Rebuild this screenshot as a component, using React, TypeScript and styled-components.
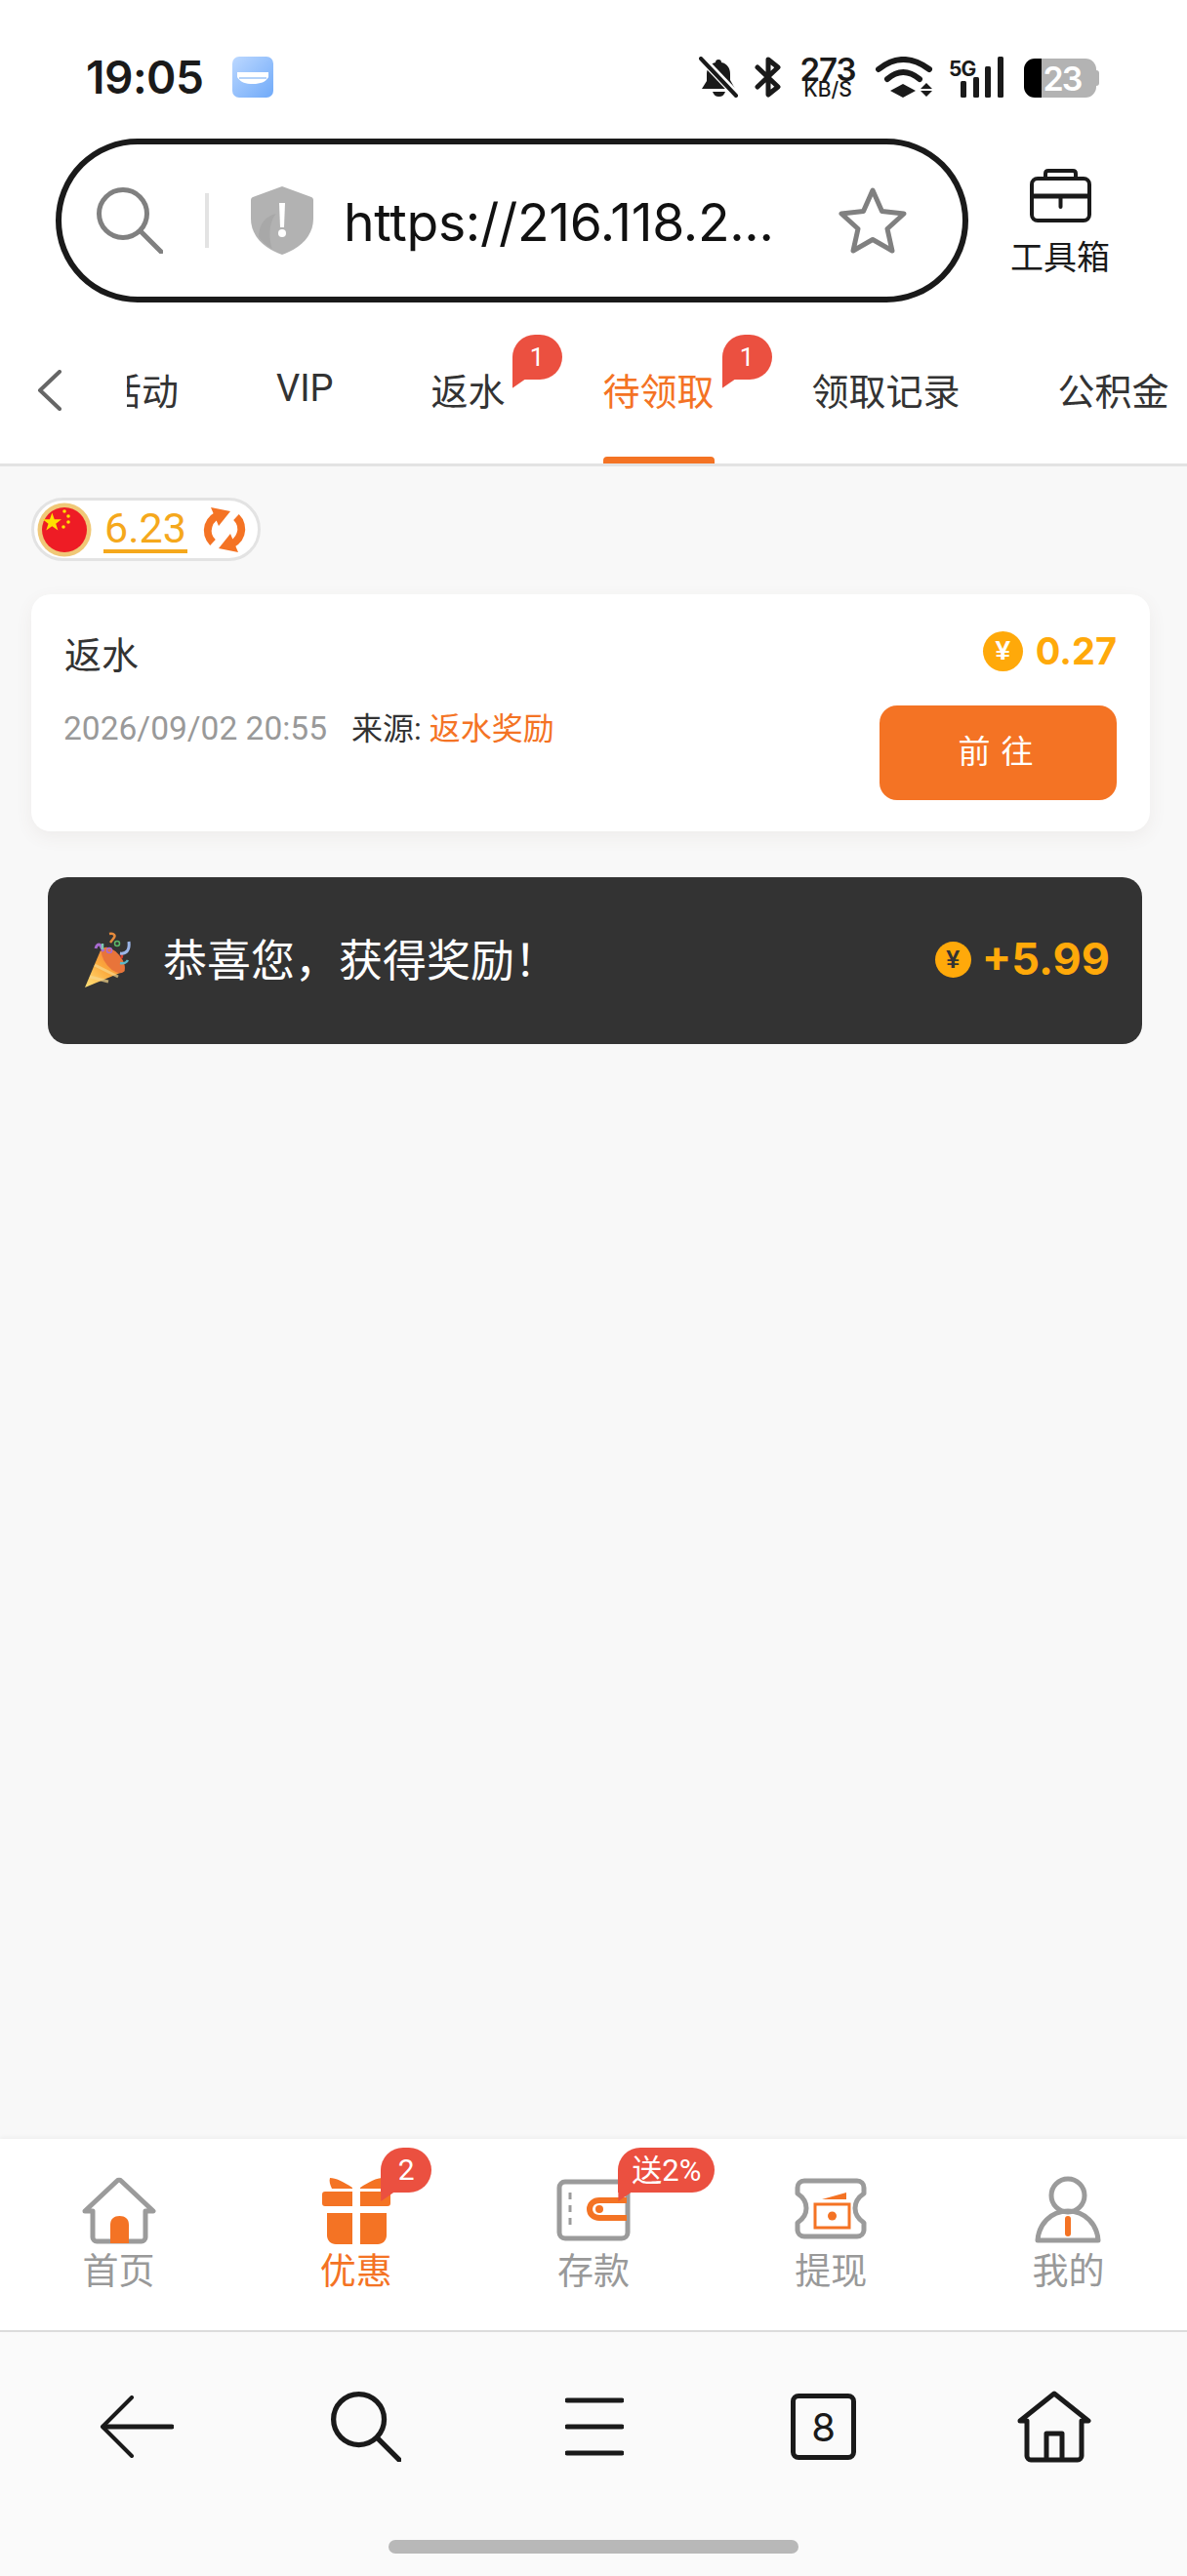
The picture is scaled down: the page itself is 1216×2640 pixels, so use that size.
import React from 'react';
import styled, { createGlobalStyle } from 'styled-components';

const ORANGE = '#f47324';
const GOLD = '#ffa90a';
const RED = '#eb5040';
const CJK = '"Noto Sans CJK SC", sans-serif';

const GlobalStyle = createGlobalStyle`
  html, body {
    margin: 0;
    padding: 0;
    background: #fff;
  }
  * {
    box-sizing: border-box;
  }
  body {
    font-family: Roboto, ${CJK};
  }
`;

const Page = styled.div`
  width: 1216px;
  height: 2640px;
  display: flex;
  flex-direction: column;
  overflow: hidden;
  background: #fff;
`;

/* status bar */
const StatusBar = styled.div`
  height: 142px;
  flex: none;
  display: flex;
  justify-content: space-between;
  align-items: flex-start;
  padding: 58px 90px 0 88px;
`;

const StatusLeft = styled.div`
  display: flex;
  align-items: center;
  gap: 30px;
`;

const Clock = styled.span`
  font-family: Inter, sans-serif;
  font-size: 46px;
  font-weight: 600;
  line-height: 42px;
  letter-spacing: -0.5px;
  color: #1a1a1a;
`;

const StatusRight = styled.div`
  display: flex;
  align-items: flex-start;
  gap: 0;
  height: 42px;
`;

const StatusGap = styled.span`
  width: 16px;
`;

const Speed = styled.div`
  width: 56px;
  margin: 0 21px 0 20px;
  display: flex;
  flex-direction: column;
  align-items: center;
  font-family: Inter, sans-serif;
  font-weight: 600;
  color: #1a1a1a;
`;

const SpeedValue = styled.span`
  font-size: 33px;
  line-height: 26px;
  letter-spacing: -1px;
  white-space: nowrap;
`;

const SpeedUnit = styled.span`
  font-size: 21px;
  line-height: 16px;
  font-weight: 500;
  white-space: nowrap;
`;

const Battery = styled.div`
  position: relative;
  width: 74px;
  height: 40px;
  margin: 2px 3px 0 21px;
  border-radius: 11px;
  display: flex;
  align-items: center;
  justify-content: center;
  padding-left: 4px;
  font-family: Inter, sans-serif;
  font-size: 34px;
  font-weight: 600;
  letter-spacing: -2px;
  color: #fff;
  background: linear-gradient(to right, #000 18px, #b3b3b3 18px);

  &::after {
    content: '';
    position: absolute;
    right: -3px;
    top: 12px;
    width: 3px;
    height: 16px;
    border-radius: 0 3px 3px 0;
    background: #b3b3b3;
  }
`;

/* address row */
const AddressRow = styled.div`
  height: 178px;
  flex: none;
  display: flex;
  align-items: flex-start;
  padding-left: 57px;
`;

const AddressPill = styled.div`
  width: 935px;
  height: 168px;
  flex: none;
  display: flex;
  align-items: center;
  padding: 0 56px 0 36px;
  border: 6px solid #1a1a1a;
  border-radius: 84px;
`;

const AddressDivider = styled.span`
  width: 4px;
  height: 56px;
  margin: 0 43px;
  flex: none;
  background: #e3e3e3;
`;

const Url = styled.span`
  flex: 1;
  margin-left: 31px;
  padding-top: 2px;
  font-family: Inter, sans-serif;
  font-size: 53.500px;
  letter-spacing: -0.3px;
  white-space: nowrap;
  color: #111;
`;

const Toolbox = styled.div`
  flex: 1;
  display: flex;
  flex-direction: column;
  align-items: center;
  padding: 31px 36px 0 0;
  gap: 13px;
  font-family: ${CJK};
  font-size: 34px;
  line-height: 42px;
  color: #1a1a1a;
`;

/* tabs */
const TabBar = styled.div`
  height: 158px;
  flex: none;
  display: flex;
  align-items: stretch;
  border-bottom: 3px solid #e3e3e3;
`;

const BackButton = styled.div`
  width: 130px;
  flex: none;
  display: flex;
  align-items: center;
  padding: 4px 0 0 38px;
`;

const TabScroller = styled.div`
  flex: 1;
  display: flex;
  gap: 100px;
  overflow: hidden;
  white-space: nowrap;
`;

const Tab = styled.div<{ $active?: boolean; $offset?: number }>`
  position: relative;
  flex: none;
  display: flex;
  align-items: center;
  padding-top: 1px;
  margin-left: ${(p) => p.$offset ?? 0}px;
  font-size: 38px;
  color: ${(p) => (p.$active ? ORANGE : '#333')};

  ${(p) =>
    p.$active &&
    `&::after {
      content: '';
      position: absolute;
      left: 0;
      right: 0;
      bottom: 0;
      height: 7px;
      border-radius: 4px 4px 0 0;
      background: ${ORANGE};
    }`}
`;

const Bubble = styled.span<{ $top: number; $left: number; $width: number; $size: number }>`
  position: absolute;
  top: ${(p) => p.$top}px;
  left: ${(p) => p.$left}px;
  width: ${(p) => p.$width}px;
  height: 46px;
  display: flex;
  align-items: center;
  justify-content: center;
  border-radius: 23px 23px 23px 0;
  font-family: Roboto, ${CJK};
  font-size: ${(p) => p.$size}px;
  line-height: 1;
  color: #fff;
  background: ${RED};

  &::after {
    content: '';
    position: absolute;
    left: 0;
    top: 100%;
    width: 13px;
    height: 9px;
    background: ${RED};
    clip-path: polygon(0 0, 100% 0, 0 100%);
  }
`;

/* content */
const Main = styled.div`
  flex: 1;
  padding: 32px 38px 0 32px;
  background: #f8f8f8;
`;

const RatePill = styled.div`
  width: 235px;
  height: 65px;
  display: flex;
  align-items: center;
  padding-left: 3px;
  border: 3px solid #e3e3e3;
  border-radius: 33px;
  background: #fff;
`;

const RateValue = styled.span`
  margin: 0 15px 0 12px;
  padding: 0 1px;
  font-size: 43px;
  font-weight: 400;
  line-height: 46px;
  height: 49px;
  color: #f5a81c;
  border-bottom: 4px solid #f5a81c;
`;

const Card = styled.div`
  margin-top: 34px;
  padding: 33px 34px 32px;
  border-radius: 20px;
  background: #fff;
  box-shadow: 0 6px 18px rgba(120, 90, 70, 0.07);
`;

const CardRow = styled.div<{ $gap?: number }>`
  display: flex;
  justify-content: space-between;
  align-items: flex-start;
  margin-bottom: ${(p) => p.$gap ?? 0}px;
`;

const CardTitle = styled.span`
  font-size: 38px;
  line-height: 60px;
  color: #333;
`;

const Amount = styled.span<{ $size: number; $gap: number }>`
  display: flex;
  align-items: center;
  gap: ${(p) => p.$gap}px;
  font-family: Inter, sans-serif;
  font-size: ${(p) => p.$size}px;
  font-weight: 700;
  line-height: 50px;
  color: ${GOLD};
`;

const Coin = styled.span<{ $size: number; $ink: string }>`
  width: ${(p) => p.$size}px;
  height: ${(p) => p.$size}px;
  flex: none;
  display: flex;
  align-items: center;
  justify-content: center;
  border-radius: 50%;
  background: ${GOLD};
  color: ${(p) => p.$ink};
  font-family: "Liberation Sans", sans-serif;
  font-size: ${(p) => Math.round(p.$size * 0.68)}px;
  font-weight: 700;
  line-height: 1;
`;

const CardMeta = styled.div`
  display: flex;
  gap: 25px;
  font-size: 32px;
  line-height: 48px;
`;

const MetaDate = styled.span`
  font-size: 33.500px;
  margin-left: -1px;
  color: #999;
`;

const MetaSource = styled.span`
  color: #333;
`;

const MetaLink = styled.span`
  color: ${ORANGE};
`;

const GoButton = styled.button`
  width: 243px;
  height: 97px;
  border: 0;
  border-radius: 18px;
  padding: 0 0 8px 6px;
  font-family: ${CJK};
  font-size: 33px;
  letter-spacing: 11px;
  color: #fff;
  background: ${ORANGE};
`;

const Toast = styled.div`
  width: 1121px;
  height: 171px;
  margin: 47px 0 0 17px;
  display: flex;
  align-items: center;
  justify-content: space-between;
  padding: 0 33px 0 38px;
  border-radius: 20px;
  background: #333;
`;

const ToastText = styled.div`
  display: flex;
  align-items: center;
  gap: 30px;
  font-family: ${CJK};
  font-size: 45px;
  line-height: 60px;
  color: #fff;
`;

const ToastLabel = styled.span`
  padding-bottom: 5px;
`;

const ToastAmount = styled.div`
  padding-bottom: 3px;
`;

/* bottom navigation */
const SiteNav = styled.div`
  height: 198px;
  flex: none;
  display: grid;
  grid-template-columns: repeat(5, 1fr);
  border-bottom: 2px solid #dcdcdc;
  background: #fff;
  box-shadow: 0 -2px 4px rgba(0, 0, 0, 0.04);
  position: relative;
`;

const SiteItem = styled.div<{ $active?: boolean }>`
  position: relative;
  display: flex;
  flex-direction: column;
  align-items: center;
  padding-top: 38px;
  font-size: 37px;
  line-height: 48px;
  color: ${(p) => (p.$active ? ORANGE : '#999')};
`;

const SiteIcon = styled.div`
  height: 75px;
  display: flex;
  align-items: flex-start;
`;

const BrowserNav = styled.div`
  height: 250px;
  flex: none;
  display: flex;
  flex-direction: column;
  align-items: center;
  background: #fafafa;
`;

const BrowserButtons = styled.div`
  width: 100%;
  height: 213px;
  display: flex;
  justify-content: space-between;
  align-items: flex-start;
  padding: 57px 96px 0 100px;
`;

const BrowserButton = styled.div`
  width: 80px;
  height: 80px;
  display: flex;
  align-items: center;
  justify-content: center;
`;

const TabCount = styled.div`
  width: 67px;
  height: 68px;
  margin-right: 3px;
  display: flex;
  align-items: center;
  justify-content: center;
  border: 5px solid #1a1a1a;
  border-radius: 8px;
  font-family: Inter, sans-serif;
  font-size: 40px;
  color: #1a1a1a;
`;

const HomeIndicator = styled.div`
  width: 420px;
  height: 14px;
  border-radius: 7px;
  background: #b8b8b8;
`;

const BellOff = () => (
  <svg width="41" height="42" viewBox="0 0 41 42">
    <path fill="#1a1a1a" d="M20 3c2 0 3 1 3 3 6 1 9 6 9 12v6l5 9H3l5-8v-7c0-6 4-11 9-12 0-2 1-3 3-3z" />
    <path fill="#1a1a1a" d="M14 36h13c-1 3-3 5-6.500 5S15 39 14 36z" />
    <path stroke="#fff" strokeWidth="8" d="M2 1l37 39" />
    <path stroke="#1a1a1a" strokeWidth="4" strokeLinecap="round" d="M2 2l36 38" />
  </svg>
);

const Bluetooth = () => (
  <svg width="27" height="42" viewBox="0 0 27 42" fill="none" stroke="#1a1a1a" strokeWidth="5" strokeLinejoin="round" strokeLinecap="round">
    <path d="M3 11l21 20-10 8V3l10 8L3 31" />
  </svg>
);

const Wifi = () => (
  <svg width="59" height="42" viewBox="0 0 59 42" fill="none">
    <path d="M3 13Q28-7 55 13" stroke="#1a1a1a" strokeWidth="6" strokeLinecap="round" />
    <path d="M12 23Q28 9 45 23" stroke="#1a1a1a" strokeWidth="6" strokeLinecap="round" />
    <path d="M28 28l13 7-13 7-13-7z" fill="#1a1a1a" />
    <path d="M52 27l6 6H46zM52 41l-6-6h12z" fill="#1a1a1a" />
  </svg>
);

const Signal = () => (
  <svg width="56" height="42" viewBox="0 0 56 42" style={{ marginLeft: 16 }}>
    <text x="0" y="20" fontFamily="Inter, sans-serif" fontWeight="700" fontSize="21" letterSpacing="-1" fill="#1a1a1a">5G</text>
    <rect x="12" y="25" width="6" height="17" rx="1.500" fill="#1a1a1a" />
    <rect x="25" y="21" width="6" height="21" rx="1.500" fill="#1a1a1a" />
    <rect x="37" y="10" width="6" height="32" rx="1.500" fill="#1a1a1a" />
    <rect x="50" y="0" width="6" height="42" rx="1.500" fill="#1a1a1a" />
  </svg>
);

const AppBadge = () => (
  <svg width="42" height="42" viewBox="0 0 42 42">
    <defs>
      <linearGradient id="appBlue" x1="0" y1="0" x2="1" y2="1">
        <stop offset="0" stopColor="#bcd8ff" />
        <stop offset="1" stopColor="#70aaf9" />
      </linearGradient>
    </defs>
    <rect width="42" height="42" rx="7" fill="url(#appBlue)" />
    <path d="M5 16h32v5c-3 5-8 7-16 7S8 26 5 21z" fill="#fff" />
    <path d="M7 22h28" stroke="#9cc4f7" strokeWidth="1.500" />
  </svg>
);

const Magnifier = ({ color, size, width }: { color: string; size: number; width: number }) => (
  <svg width={size} height={size} viewBox="0 0 68 68" fill="none" stroke={color} strokeWidth={width} strokeLinecap="round">
    <circle cx="27" cy="27" r="24.500" />
    <path d="M45 45l21 21" />
  </svg>
);

const Shield = () => (
  <svg width="64" height="70" viewBox="0 0 64 70">
    <path d="M32 0l30 11c2 1 2 2 2 4v18c0 17-12 30-32 37C12 63 0 50 0 33V15c0-2 0-3 2-4z" fill="#b2b2b2" />
    <path d="M8 52c0-14 8-22 18-24-6 6-9 22-4 36-6-3-10-7-14-12z" fill="#a8a8a8" />
    <path d="M29 17h6l-1 25h-4z" fill="#fff" />
    <circle cx="32" cy="48" r="4" fill="#fff" />
  </svg>
);

const Star = () => (
  <svg width="72" height="70" viewBox="0 0 72 70" fill="none" stroke="#808080" strokeWidth="5" strokeLinejoin="round">
    <path d="M36 4l9.500 21.500L68 28 51 43.500 56 66 36 54.500 16 66l5-22.500L4 28l22.500-2.500z" />
  </svg>
);

const ToolboxIcon = () => (
  <svg width="63" height="55" viewBox="0 0 63 55" fill="none" stroke="#1a1a1a" strokeWidth="4" strokeLinejoin="round">
    <path d="M16 10V5c0-2 1-3 3-3h25c2 0 3 1 3 3v5" />
    <rect x="2" y="10" width="59" height="43" rx="6" />
    <path d="M2 28h59" strokeWidth="5" />
    <path d="M31.500 28v11" strokeLinecap="round" />
  </svg>
);

const Flag = () => (
  <svg width="56" height="56" viewBox="0 0 56 56" style={{ flex: 'none' }}>
    <circle cx="28" cy="28" r="27.500" fill="#f0c877" />
    <circle cx="28" cy="28" r="23" fill="#ee1c25" />
    <path fill="#ffe000" d="M16 10l2.500 7H26l-6 4.500 2.300 7.200L16 24.300l-6.300 4.400L12 21.500 6 17h7.500z" transform="translate(0 1) scale(.96)" />
    <circle cx="28" cy="9" r="1.800" fill="#ffe000" />
    <circle cx="32" cy="14" r="1.800" fill="#ffe000" />
    <circle cx="32" cy="20" r="1.800" fill="#ffe000" />
    <circle cx="27" cy="25" r="1.800" fill="#ffe000" />
  </svg>
);

const Refresh = () => (
  <svg width="46" height="46" viewBox="0 0 46 46" fill={ORANGE}>
    <path d="M20 7A17 17 0 0 0 11 36" fill="none" stroke={ORANGE} strokeWidth="8" />
    <path d="M26 39A17 17 0 0 0 35 10" fill="none" stroke={ORANGE} strokeWidth="8" />
    <path d="M9 0l20 4-12 15z" />
    <path d="M37 46l-20-4 12-15z" />
  </svg>
);

const Popper = () => (
  <svg width="50" height="60" viewBox="0 0 50 60" fill="none" style={{ flex: 'none' }}>
    <defs>
      <linearGradient id="cone" x1="0" y1="1" x2="1" y2="0">
        <stop offset="0" stopColor="#ffe27a" />
        <stop offset="0.5" stopColor="#fba83c" />
        <stop offset="1" stopColor="#ee6a3c" />
      </linearGradient>
    </defs>
    <path d="M0 57L16 19l25 21z" fill="url(#cone)" />
    <path d="M5 46l19 5M10 34l24 12" stroke="#f6d68a" strokeWidth="3" opacity=".7" />
    <ellipse cx="29" cy="29" rx="8" ry="16" transform="rotate(-40 29 29)" fill="#e8743a" />
    <path d="M11 17c1-4 3-5 5-3l3 6" stroke="#a86bd0" strokeWidth="3" />
    <path d="M25 2c5-1 7 2 4 5l-3 4" stroke="#e58a3c" strokeWidth="2.500" />
    <path d="M36 22c3 1 2 4 1 5" stroke="#d8402f" strokeWidth="2.500" />
    <path d="M36 32c4 1 7-1 8-3" stroke="#5cb8c8" strokeWidth="2.500" />
    <path d="M45 10c1 8-2 13-9 12" stroke="#9bb5e8" strokeWidth="3" />
    <circle cx="33" cy="12" r="2.500" stroke="#5bb868" strokeWidth="1.500" />
    <path d="M18 12v6" stroke="#7cc8b0" strokeWidth="2.500" />
    <circle cx="25" cy="19" r="2.500" stroke="#a86bd0" strokeWidth="1.500" />
  </svg>
);

const HomeGlyph = () => (
  <svg width="76" height="70" viewBox="0 0 76 70" fill="none">
    <path d="M3 36L36 5c1-1 3-1 4 0l33 31h-8v27c0 2-2 4-4 4H15c-2 0-4-2-4-4V36z" stroke="#9b9b9b" strokeWidth="5" strokeLinejoin="round" />
    <path d="M29 69V50c0-6 4-9 9.500-9s9.500 3 9.500 9v19z" fill={ORANGE} />
  </svg>
);

const GiftGlyph = () => (
  <svg width="70" height="70" viewBox="0 0 70 70" fill={ORANGE}>
    <path d="M8 2c6 0 14 4 23 10v1H10C8 9 7 5 8 2zM62 2c-6 0-14 4-23 10v1h21c2-4 3-8 2-11z" />
    <path d="M3 16h28v15H3c-2 0-3-1-3-3V19c0-2 1-3 3-3zM39 16h28c2 0 3 1 3 3v9c0 2-1 3-3 3H39z" />
    <path d="M5 38h26v32H14c-5 0-9-4-9-9zM39 38h27v23c0 5-4 9-9 9H39z" />
  </svg>
);

const WalletGlyph = () => (
  <svg width="76" height="64" viewBox="0 0 76 64" fill="none" style={{ marginTop: 3 }}>
    <rect x="3" y="3" width="70" height="58" rx="6" stroke="#9b9b9b" strokeWidth="5" />
    <path d="M14 14v34" stroke="#9b9b9b" strokeWidth="3" strokeDasharray="7 6" />
    <path d="M72 22H44c-6 0-10 4-10 9s4 9 10 9h28" stroke={ORANGE} strokeWidth="6" />
    <circle cx="44" cy="31" r="4" fill={ORANGE} />
  </svg>
);

const TicketGlyph = () => (
  <svg width="76" height="64" viewBox="0 0 76 64" fill="none" style={{ marginTop: 2 }}>
    <path
      d="M11 3h54c4 0 7 3 7 7v6c-6 4-9 9-9 15s3 11 9 15v7c0 4-3 7-7 7H11c-4 0-7-3-7-7v-7c6-4 9-9 9-15S10 20 4 16v-6c0-4 3-7 7-7z"
      stroke="#9b9b9b"
      strokeWidth="5"
      strokeLinejoin="round"
    />
    <rect x="22" y="27" width="35" height="24" stroke={ORANGE} strokeWidth="3" />
    <circle cx="39.500" cy="39" r="4.500" fill={ORANGE} />
    <path d="M29 22l25-7v7z" fill={ORANGE} />
  </svg>
);

const UserGlyph = () => (
  <svg width="68" height="70" viewBox="0 0 68 70" fill="none">
    <circle cx="34" cy="20" r="17" stroke="#9b9b9b" strokeWidth="5" />
    <path d="M34 36c-18 0-30 14-31 30h62c-1-16-13-30-31-30z" stroke="#9b9b9b" strokeWidth="5" strokeLinejoin="round" />
    <path d="M34 44v15" stroke={ORANGE} strokeWidth="6" strokeLinecap="round" />
  </svg>
);

const tabs = [
  { label: '活动', offset: -23 },
  { label: 'VIP' },
  { label: '返水', badgeLeft: 83 },
  { label: '待领取', active: true, badgeLeft: 122 },
  { label: '领取记录' },
  { label: '公积金' },
];

const siteNav = [
  { label: '首页', icon: <HomeGlyph /> },
  { label: '优惠', icon: <GiftGlyph />, active: true, badge: { text: '2', left: 147, width: 52, size: 30 } },
  { label: '存款', icon: <WalletGlyph />, badge: { text: '送2%', left: 147, width: 99, size: 31 } },
  { label: '提现', icon: <TicketGlyph /> },
  { label: '我的', icon: <UserGlyph /> },
];

export default function App() {
  return (
    <Page>
      <GlobalStyle />
      <StatusBar>
        <StatusLeft>
          <Clock>19:05</Clock>
          <AppBadge />
        </StatusLeft>
        <StatusRight>
          <BellOff />
          <StatusGap />
          <Bluetooth />
          <Speed>
            <SpeedValue>273</SpeedValue>
            <SpeedUnit>KB/S</SpeedUnit>
          </Speed>
          <Wifi />
          <Signal />
          <Battery>23</Battery>
        </StatusRight>
      </StatusBar>

      <AddressRow>
        <AddressPill>
          <Magnifier color="#808080" size={68} width={5} />
          <AddressDivider />
          <Shield />
          <Url>https://216.118.2...</Url>
          <Star />
        </AddressPill>
        <Toolbox>
          <ToolboxIcon />
          工具箱
        </Toolbox>
      </AddressRow>

      <TabBar>
        <BackButton>
          <svg width="26" height="42" viewBox="0 0 26 42" fill="none" stroke="#666" strokeWidth="4" strokeLinecap="round" strokeLinejoin="round">
            <path d="M23 2L3 21l20 19" />
          </svg>
        </BackButton>
        <TabScroller>
          {tabs.map((t) => (
            <Tab key={t.label} $active={t.active} $offset={t.offset}>
              {t.label}
              {t.badgeLeft && (
                <Bubble $top={23} $left={t.badgeLeft} $width={51} $size={26}>
                  1
                </Bubble>
              )}
            </Tab>
          ))}
        </TabScroller>
      </TabBar>

      <Main>
        <RatePill>
          <Flag />
          <RateValue>6.23</RateValue>
          <Refresh />
        </RatePill>

        <Card>
          <CardRow $gap={21}>
            <CardTitle>返水</CardTitle>
            <Amount $size={38} $gap={13}>
              <Coin $size={41} $ink="#fff">¥</Coin>
              0.27
            </Amount>
          </CardRow>
          <CardRow>
            <CardMeta>
              <MetaDate>2026/09/02 20:55</MetaDate>
              <MetaSource>
                来源: <MetaLink>返水奖励</MetaLink>
              </MetaSource>
            </CardMeta>
            <GoButton>前往</GoButton>
          </CardRow>
        </Card>

        <Toast>
          <ToastText>
            <Popper />
            <ToastLabel>恭喜您，获得奖励！</ToastLabel>
          </ToastText>
          <ToastAmount>
            <Amount $size={45} $gap={11}>
              <Coin $size={37} $ink="#333">¥</Coin>
              +5.99
            </Amount>
          </ToastAmount>
        </Toast>
      </Main>

      <SiteNav>
        {siteNav.map((item) => (
          <SiteItem key={item.label} $active={item.active}>
            <SiteIcon>{item.icon}</SiteIcon>
            {item.label}
            {item.badge && (
              <Bubble $top={9} $left={item.badge.left} $width={item.badge.width} $size={item.badge.size}>
                {item.badge.text}
              </Bubble>
            )}
          </SiteItem>
        ))}
      </SiteNav>

      <BrowserNav>
        <BrowserButtons>
          <BrowserButton>
            <svg width="76" height="64" viewBox="0 0 76 64" fill="none" stroke="#1a1a1a" strokeLinecap="round" strokeLinejoin="round">
              <path d="M33 2L3 32l30 30" strokeWidth="4" />
              <path d="M4 32h70" strokeWidth="5" />
            </svg>
          </BrowserButton>
          <BrowserButton>
            <Magnifier color="#1a1a1a" size={72} width={5} />
          </BrowserButton>
          <BrowserButton>
            <svg width="60" height="62" viewBox="0 0 60 62" fill="none" stroke="#1a1a1a" strokeWidth="5" strokeLinecap="round" style={{ marginRight: 2 }}>
              <path d="M2 4h56M2 31h56M2 58h56" />
            </svg>
          </BrowserButton>
          <BrowserButton>
            <TabCount>8</TabCount>
          </BrowserButton>
          <BrowserButton>
            <svg width="76" height="74" viewBox="0 0 76 74" fill="none" stroke="#1a1a1a" strokeWidth="5" strokeLinejoin="round">
              <path d="M3 31L38 3l35 28h-7v36c0 2-2 4-4 4H14c-2 0-4-2-4-4V31z" />
              <path d="M30 70V44h16v26" />
            </svg>
          </BrowserButton>
        </BrowserButtons>
        <HomeIndicator />
      </BrowserNav>
    </Page>
  );
}
